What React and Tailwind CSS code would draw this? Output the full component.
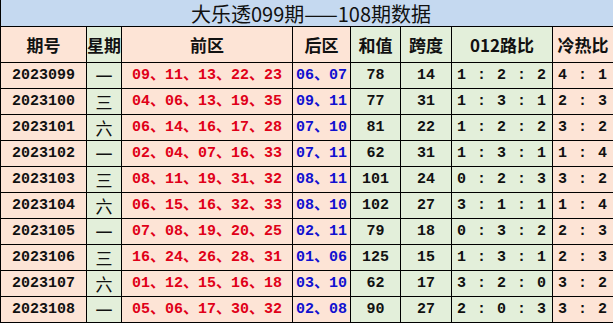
import React from "react";

const rows = [
  ["2023099", "一", "09、11、13、22、23", "06、07", "78", "14", "1:2:2", "4:1"],
  ["2023100", "三", "04、06、13、19、35", "09、11", "77", "31", "1:3:1", "2:3"],
  ["2023101", "六", "06、14、16、17、28", "07、10", "81", "22", "1:2:2", "3:2"],
  ["2023102", "一", "02、04、07、16、33", "07、11", "62", "31", "1:3:1", "1:4"],
  ["2023103", "三", "08、11、19、31、32", "08、11", "101", "24", "0:2:3", "3:2"],
  ["2023104", "六", "06、15、16、32、33", "08、10", "102", "27", "3:1:1", "1:4"],
  ["2023105", "一", "07、08、19、20、25", "02、11", "79", "18", "0:3:2", "2:3"],
  ["2023106", "三", "16、24、26、28、31", "01、06", "125", "15", "1:3:1", "2:3"],
  ["2023107", "六", "01、12、15、16、18", "03、10", "62", "17", "3:2:0", "3:2"],
  ["2023108", "一", "05、06、17、30、32", "02、08", "90", "27", "2:0:3", "3:2"],
];

const pink = "bg-[#fde4d6]";
const green = "bg-[#e3efda]";
const colBg = [pink, green, pink, pink, green, green, green, pink];
const headers = ["期号", "星期", "前区", "后区", "和值", "跨度", "012路比", "冷热比"];

const mono = "font-['Liberation_Mono','Noto_Sans_CJK_SC',monospace] font-bold text-[15px]";
const cjk = "font-['Noto_Sans_CJK_SC',sans-serif]";

const Ratio = ({ value }) => (
  <span className="whitespace-pre tracking-[1px]">{value.split(":").join(" : ")}</span>
);

export default function App() {
  return (
    <div className="w-[613px] h-[323px] overflow-hidden bg-white">
      <div className="border-l border-black">
        <div
          className={`h-[27px] border-b border-black bg-[#c5d9f0] flex items-center justify-center text-[20px] leading-none text-[#111] ${cjk}`}
        >
          <span className="pl-[8px] pt-[2px]">大乐透099期——108期数据</span>
        </div>
        <div className="grid grid-cols-[86px_35px_171px_58px_50px_51px_101px_60px]">
          {headers.map((h, i) => (
            <div
              key={h}
              className={`h-[36px] border-b border-r border-black ${colBg[i]} flex items-center justify-center font-bold text-[17px] leading-none text-[#111] whitespace-nowrap ${cjk} ${i === 6 ? "font-['Liberation_Mono','Noto_Sans_CJK_SC',monospace]" : ""} ${i === 7 ? "border-r-0" : ""}`}
            >
              {h}
            </div>
          ))}
          {rows.map((r) =>
            r.map((cell, i) => {
              let color = "text-[#111]";
              if (i === 2) color = "text-[#e00018]";
              if (i === 3) color = "text-[#1010d0]";
              return (
                <div
                  key={r[0] + i}
                  className={`h-[26px] border-b border-r border-black ${colBg[i]} flex items-center justify-center whitespace-nowrap leading-none ${color} ${
                    i === 1 ? `${cjk} text-[17px]` : mono
                  } ${i === 7 ? "border-r-0" : ""}`}
                >
                  {i === 6 || i === 7 ? <Ratio value={cell} /> : cell}
                </div>
              );
            })
          )}
        </div>
      </div>
    </div>
  );
}
